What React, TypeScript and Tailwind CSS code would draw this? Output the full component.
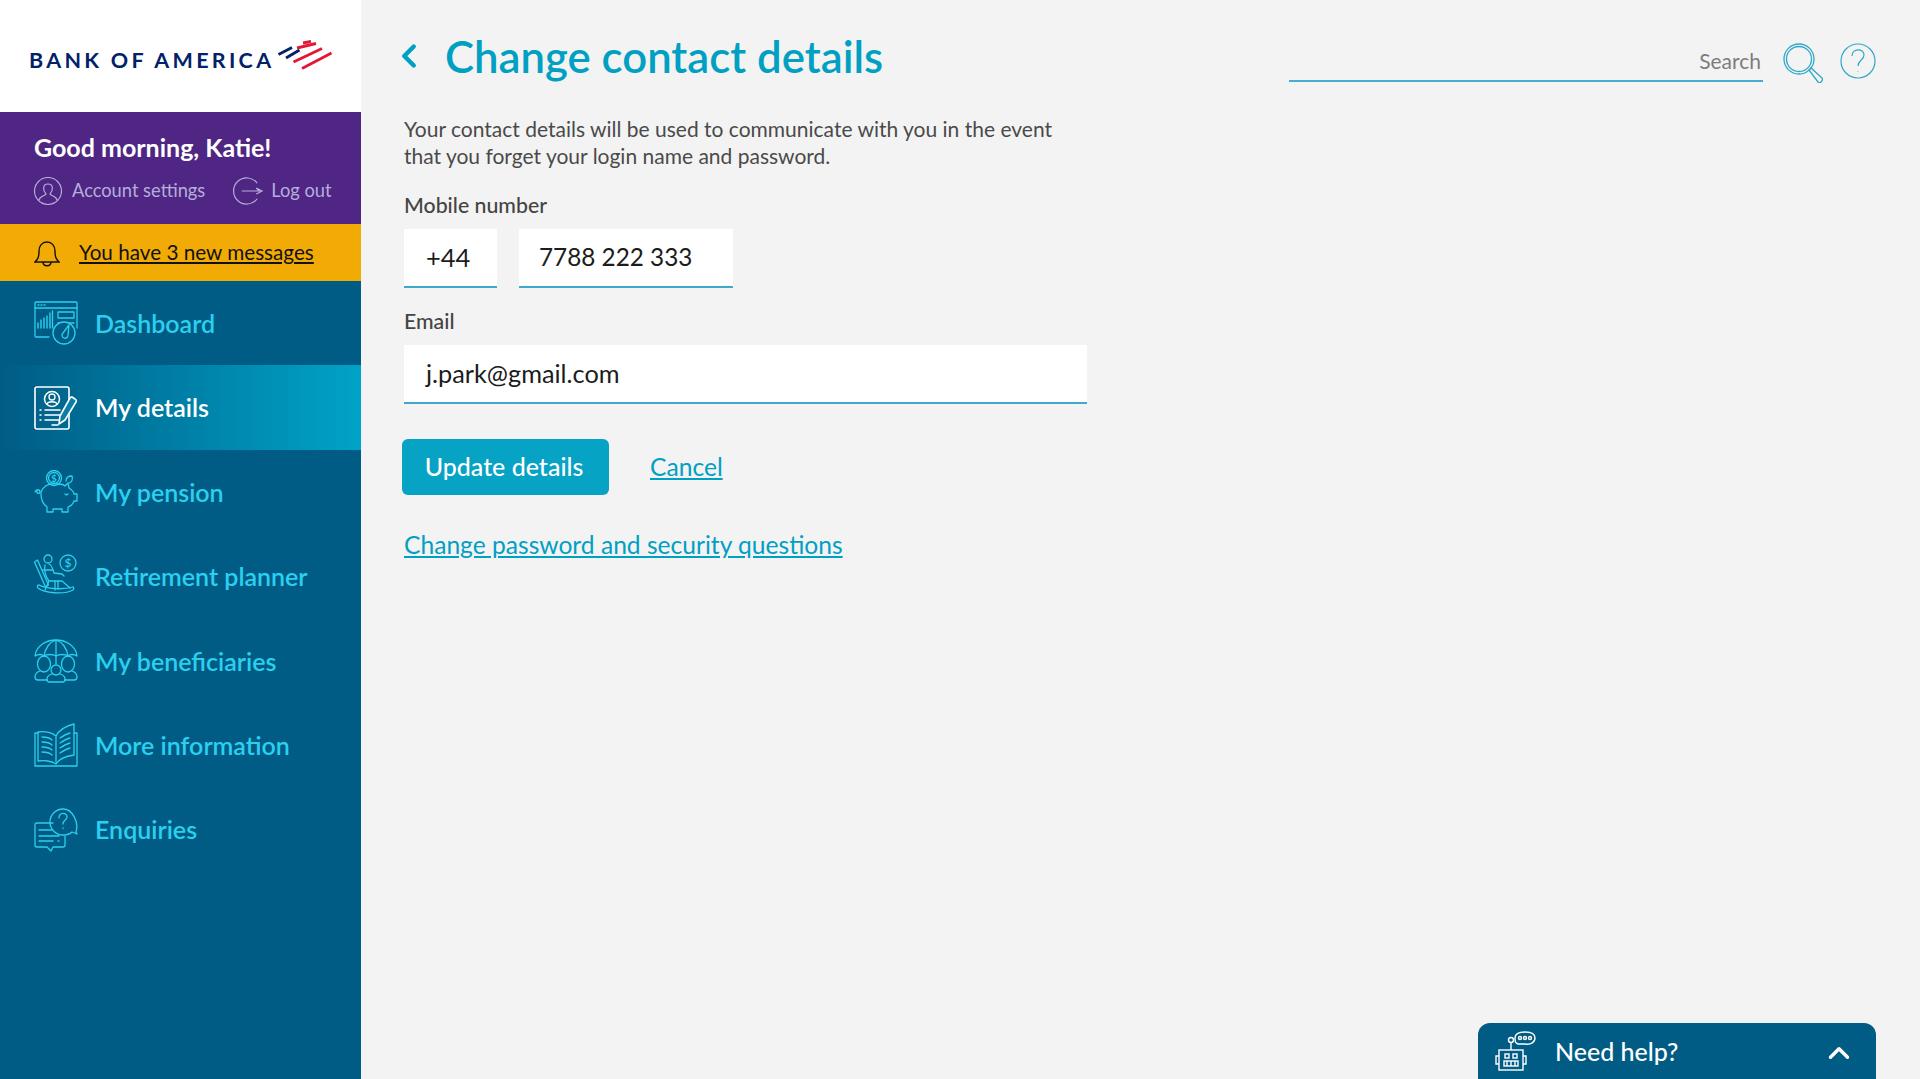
import React from "react";
import { ChevronLeft, ChevronUp } from "lucide-react";

const FONT = "font-['Lato','Open_Sans',sans-serif]";

function Flag() {
  return (
    <svg viewBox="0 0 66 42" className="w-[66px] h-[42px] shrink-0 -ml-[2px]" fill="none">
      <path d="M6.500 19.500 L20 12.500 M14 23 L27.500 15" stroke="#012169" strokeWidth="2.800" />
      <path d="M31 8 L39 6.500 M25 13 L44 8.500 M21.500 27 L50 13.500 M30 33.500 L59.500 18" stroke="#e31837" strokeWidth="2.900" />
    </svg>
  );
}

function LineIcon({ children, white }: { children: React.ReactNode; white?: boolean }) {
  return (
    <svg
      viewBox="0 0 44 44"
      className={`w-[44px] h-[44px] shrink-0 ${white ? "text-white" : "text-[#2bd0ef]"}`}
      fill="none"
      stroke="currentColor"
      strokeWidth="1.300"
      strokeLinecap="round"
      strokeLinejoin="round"
    >
      {children}
    </svg>
  );
}

const DashboardIcon = () => (
  <LineIcon>
    <path d="M15 36H2a1 1 0 0 1-1-1V2a1 1 0 0 1 1-1h40a1 1 0 0 1 1 1v25" />
    <path d="M1 7h42M4 4h1M7 4h1M10 4h1" />
    <path d="M4 27v-5M7 27v-8M10 27v-10M13 27v-12M16 27V12M18.500 27V10" strokeWidth="1.400" />
    <rect x="24" y="11" width="16" height="6" />
    <path d="M24 22h16" />
    <circle cx="30" cy="32" r="11" fill="#005c85" />
    <path d="M35 24l-6 8a3 3 0 1 0 5 2z" />
  </LineIcon>
);
const DetailsIcon = () => (
  <LineIcon white>
    <rect x="1" y="1" width="34" height="42" rx="2" strokeWidth="1.600" />
    <circle cx="18" cy="13" r="7.500" strokeWidth="1.500" />
    <circle cx="18" cy="11" r="3" />
    <path d="M13 18c1-3 9-3 10 0" />
    <path d="M6 24h1M11 24h15M6 29h1M11 29h15M6 34h1M11 34h15M18 39h6" strokeWidth="1.500" />
    <path d="M41 13l-3-2a2 2 0 0 0-2 1L26 30l-1 8 6-4 11-18a2 2 0 0 0-1-3z" fill="#0a7ea4" strokeWidth="1.600" />
  </LineIcon>
);
const PensionIcon = () => (
  <LineIcon>
    <circle cx="20" cy="8" r="7.500" />
    <circle cx="20" cy="8" r="5.500" />
    <text x="20" y="11.500" fontSize="10" textAnchor="middle" fill="currentColor" stroke="none" fontFamily="Lato">$</text>
    <path d="M7 22c3-7 10-9 17-8 3 0 6 1 7 2l3-3 1 5c3 2 5 4 5 6h3v7h-3c-1 3-3 5-6 6v5h-6v-3h-9v3h-6v-5c-4-3-6-8-6-13z" />
    <path d="M1 22c1-3 5-3 5 0 0 2-4 2-3-1M31 24c1 1 2 1 3 0" />
    <path d="M32 11c0-3 2-5 6-5 1 3 0 6-3 7" />
  </LineIcon>
);
const PlannerIcon = () => (
  <LineIcon>
    <circle cx="34" cy="9" r="8" />
    <text x="34" y="13" fontSize="12" textAnchor="middle" fill="currentColor" stroke="none" fontFamily="Lato">$</text>
    <circle cx="14" cy="5" r="4" />
    <path d="M0.500 8l3-2 11 25-3 2z" />
    <path d="M11 11c-1 4 0 11 4 16h13l8 7" />
    <path d="M15 10c3 1 4 6 5 9l8 1 2 2" />
    <path d="M9 16h10M15 27l-4 9M21 27v9M24 27v8" />
    <path d="M4 34c6 5 26 7 35 2 1-1 1-3 0-3-10 3-26 2-34-2-2 0-2 2-1 3z" />
  </LineIcon>
);
const BeneficiariesIcon = () => (
  <LineIcon>
    <path d="M1 17C2 7 12 1 22 1s20 6 21 16c-3-2-7-2-9 0-3-2-9-2-12 0-3-2-9-2-12 0-2-2-6-2-9 0z" />
    <path d="M22 1v24M10 17C11 9 16 3 22 1c6 2 11 8 12 16" />
    <ellipse cx="10" cy="25" rx="6.500" ry="8" />
    <ellipse cx="34" cy="25" rx="6.500" ry="8" />
    <circle cx="22" cy="31" r="5" fill="#005c85" />
    <path d="M6 32c-3 1-5 3-5 6 0 2 1 3 3 3h9M38 32c3 1 5 3 5 6 0 2-1 3-3 3h-9" />
    <path d="M18 35c-3 1-5 3-5 5 0 2 1 3 2 3h14c1 0 2-1 2-3 0-2-2-4-5-5" />
  </LineIcon>
);
const InformationIcon = () => (
  <LineIcon>
    <path d="M4 10H1v33h42V10h-3" />
    <path d="M22 39V13C18 9 10 8 4 9v29c6-1 14 0 18 3 3-5 10-8 18-9V1c-8 2-15 6-18 12" />
    <path d="M8 14c4 0 8 1 10 3M8 19c4 0 8 1 10 3M8 24c4 0 8 1 10 3M8 29c4 0 8 1 10 3" />
    <path d="M26 15c3-2 6-4 10-5M26 20c3-2 6-4 10-5M26 25c3-2 6-4 10-5M26 30c3-2 6-4 10-5" />
  </LineIcon>
);
const EnquiriesIcon = () => (
  <LineIcon>
    <path d="M19 15H3a2 2 0 0 0-2 2v20a2 2 0 0 0 2 2h10l4 4 2-4h10a2 2 0 0 0 2-2v-9" />
    <path d="M42 24c3-9-3-23-13-23a13 13 0 0 0 0 26c4 0 7-1 9-3l5 2z" />
    <path d="M5 22h13M5 28h20M5 33h14M24 33h1" />
    <path d="M25 10c0-6 8-6 8-1 0 3-4 3-4 7M29 20v.5" />
  </LineIcon>
);

const NAV = [
  { label: "Dashboard", Icon: DashboardIcon },
  { label: "My details", Icon: DetailsIcon, active: true },
  { label: "My pension", Icon: PensionIcon },
  { label: "Retirement planner", Icon: PlannerIcon },
  { label: "My beneficiaries", Icon: BeneficiariesIcon },
  { label: "More information", Icon: InformationIcon },
  { label: "Enquiries", Icon: EnquiriesIcon },
];

function Sidebar() {
  return (
    <aside className="w-[361px] shrink-0 flex flex-col bg-[#005c85]">
      <div className="h-[112px] bg-white flex items-center pl-[29px]">
        <span className="mt-[10px] text-[21.500px] font-bold tracking-[3.300px] text-[#012169] whitespace-nowrap leading-none">BANK OF AMERICA</span>
        <Flag />
      </div>
      <div className="h-[112px] bg-[#4f2683] px-[34px] pt-[17px]">
        <div className="text-[25px] leading-[36px] font-bold text-white whitespace-nowrap">Good morning, Katie!</div>
        <div className="mt-[12px] flex items-center text-[#b5aedb] text-[18.300px] whitespace-nowrap">
          <svg viewBox="0 0 28 28" className="w-[28px] h-[28px] mr-[10px] shrink-0" fill="none" stroke="currentColor" strokeWidth="1.200">
            <circle cx="14" cy="14" r="13.500" />
            <path d="M5 23c1-4 6-4 7-6-3-3-4-10 2-10s5 7 2 10c1 2 6 2 7 6" />
          </svg>
          <span>Account settings</span>
          <svg viewBox="0 0 34 28" className="ml-[27px] mr-[6px] w-[33px] h-[28px] shrink-0" fill="none" stroke="currentColor" strokeWidth="1.200">
            <path d="M26 6A13.500 13.500 0 1 0 26 22" />
            <path d="M10 14h18l-3-3M25 11l6 3-6 3" />
          </svg>
          <span>Log out</span>
        </div>
      </div>
      <div className="h-[57px] bg-[#f2ab04] flex items-center pl-[34px]">
        <svg viewBox="0 0 26 28" className="w-[26px] h-[28px] mr-[19px] shrink-0" fill="none" stroke="#111" strokeWidth="1.400">
          <path d="M1 23c3-3 4-5 4-11 0-5 3-9 8-9s8 4 8 9c0 6 1 8 4 11z" />
          <path d="M9 23c0 5 8 5 8 0" />
        </svg>
        <a className="text-[20.700px] text-[#111] underline whitespace-nowrap">You have 3 new messages</a>
      </div>
      <nav>
        {NAV.map(({ label, Icon, active }) => (
          <div
            key={label}
            className={`h-[84.400px] flex items-center pl-[34px] gap-[17px] text-[25px] font-semibold ${
              active ? "bg-gradient-to-r from-[#005c85] to-[#00a3c7] text-white" : "text-[#2bd0ef]"
            }`}
          >
            <Icon />
            <span className="whitespace-nowrap pt-[1px]">{label}</span>
          </div>
        ))}
      </nav>
    </aside>
  );
}

function Field({ value, className }: { value: string; className: string }) {
  return (
    <div className={`h-[59px] bg-white border-b-2 border-[#3fa9cb] flex items-center text-[#1c1c1c] ${className}`}>{value}</div>
  );
}

export default function App() {
  return (
    <div className={`h-[1079px] w-full flex overflow-hidden bg-[#f3f3f3] ${FONT}`}>
      <Sidebar />
      <main className="flex-1 flex flex-col pl-[42px] pr-[44px]">
        <div className="flex items-start pt-[27px] h-[115px]">
          <div className="flex items-center text-[#00a0c3]">
            <ChevronLeft className="w-[38px] h-[44px] -ml-[13px] mr-[17px]" strokeWidth={2.800} />
            <h1 className="text-[43.700px] leading-[58px] font-semibold whitespace-nowrap">Change contact details</h1>
          </div>
          <div className="ml-auto flex items-start pt-[5px]">
            <div className="w-[474px] h-[50px] border-b-2 border-[#4aaccc] flex items-end justify-end pr-[2px] pb-[4px] text-[21px] text-[#7d7d7d]">Search</div>
            <svg viewBox="0 0 40 40" className="w-[40px] h-[40px] ml-[20px] mt-[11px] text-[#2fa8c8]" fill="none" stroke="currentColor" strokeWidth="1.300">
              <circle cx="16" cy="16" r="15" />
              <circle cx="16" cy="16" r="12.500" />
              <path d="M26 27l2-2 11 10c1 1 0 3-1 4s-2 1-3 0z" />
            </svg>
            <svg viewBox="0 0 36 36" className="w-[36px] h-[36px] ml-[17px] mt-[11px] text-[#2fa8c8]" fill="none" stroke="currentColor" strokeWidth="1.200">
              <circle cx="18" cy="18" r="17" />
              <path d="M12 13c0-8 12-8 12 -1 0 5-6 5-6 11M18 28v.6" />
            </svg>
          </div>
        </div>
        <div className="pl-[1px]">
          <p className="text-[21px] leading-[27px] text-[#4a4a4a] whitespace-nowrap">
            Your contact details will be used to communicate with you in the event
            <br />
            that you forget your login name and password.
          </p>
          <label className="block mt-[22px] text-[21.300px] leading-[28px] font-medium text-[#444]">Mobile number</label>
          <div className="mt-[10px] flex gap-[22px]">
            <Field value="+44" className="w-[93px] pl-[22px] text-[25.500px]" />
            <Field value="7788 222 333" className="w-[214px] pl-[20px] text-[24.300px]" />
          </div>
          <label className="block mt-[19px] text-[21.300px] leading-[28px] font-medium text-[#444]">Email</label>
          <Field value="j.park@gmail.com" className="mt-[10px] w-[683px] pl-[22px] text-[25.300px]" />
          <div className="mt-[35px] flex items-center">
            <button className="-ml-[2px] w-[207px] h-[56px] rounded-[6px] bg-[#07a3c4] text-white text-[25px] font-medium pr-[3px]">Update details</button>
            <a className="ml-[41px] text-[24.600px] text-[#00a0c3] underline">Cancel</a>
          </div>
          <a className="block mt-[35px] text-[24.600px] leading-[30px] text-[#00a0c3] underline whitespace-nowrap">Change password and security questions</a>
        </div>
        <div className="mt-auto self-end w-[398px] h-[56px] rounded-t-[12px] bg-[#005c85] flex items-center pl-[16px] pr-[20px] text-white">
          <svg viewBox="0 0 42 40" className="w-[42px] h-[40px]" fill="none" stroke="currentColor" strokeWidth="1.400">
            <rect x="5" y="19" width="24" height="20" />
            <path d="M5 25H2v8h3M29 25h3v8h-3M17 19v-7" />
            <circle cx="17" cy="9" r="2.500" />
            <rect x="11" y="23" width="4" height="4" />
            <rect x="19" y="23" width="4" height="4" />
            <rect x="10" y="30" width="14" height="5" />
            <path d="M13 30v5M17 30v5M21 30v5" />
            <path d="M24 13c-3-1-3-3-3-6 0-4 4-6 10-6s10 2 10 6-4 7-10 6l-3 0z" />
            <circle cx="26" cy="7" r="1.500" />
            <circle cx="31" cy="7" r="1.500" />
            <circle cx="36" cy="7" r="1.500" />
          </svg>
          <span className="ml-[19px] text-[25px] font-medium pt-[1px]">Need help?</span>
          <ChevronUp className="ml-auto w-[34px] h-[34px] mt-[4px]" strokeWidth={2.400} />
        </div>
      </main>
    </div>
  );
}
